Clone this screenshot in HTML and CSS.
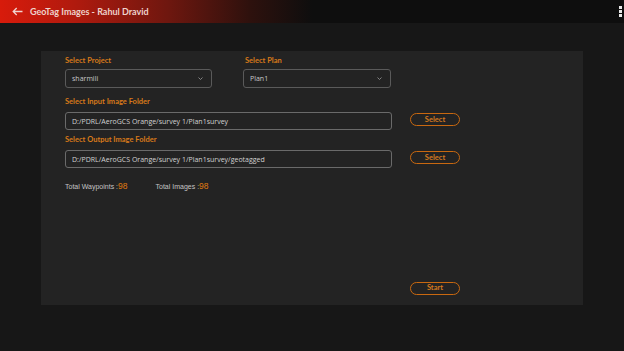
FILE: index.html
```html
<!DOCTYPE html>
<html lang="en">
<head>
  <meta charset="UTF-8" />
  <title>GeoTag Images</title>
  <link rel="stylesheet" href="styles.css">
</head>
<body>
  <header class="topbar">
    <svg class="back" width="11" height="9" viewBox="0 0 11 9">
      <path d="M10.5 4.5H1.2M4.7 1L1.2 4.5L4.7 8" fill="none" stroke="#f1d4d0" stroke-width="1.3"/>
    </svg>
    <span class="title">GeoTag Images - Rahul Dravid</span>
    <div class="menu"><i></i><i></i><i></i></div>
  </header>

  <main class="panel">
    <div class="row-selects">
      <div class="field">
        <label class="label">Select Project</label>
        <div class="dropdown wide1"><span>sharmili</span><svg width="5" height="3" viewBox="0 0 5 3"><path d="M0.5 0.5L2.5 2.5L4.5 0.5" fill="none" stroke="#9a9a9a" stroke-width="0.8"/></svg></div>
      </div>
      <div class="field">
        <label class="label">Select Plan</label>
        <div class="dropdown wide2"><span>Plan1</span><svg width="5" height="3" viewBox="0 0 5 3"><path d="M0.5 0.5L2.5 2.5L4.5 0.5" fill="none" stroke="#9a9a9a" stroke-width="0.8"/></svg></div>
      </div>
    </div>

    <label class="label folder-label first">Select Input Image Folder</label>
    <div class="folder-row">
      <div class="path-box">D:/PDRL/AeroGCS Orange/survey 1/Plan1survey</div>
      <button class="pill">Select</button>
    </div>

    <label class="label folder-label">Select Output Image Folder</label>
    <div class="folder-row">
      <div class="path-box">D:/PDRL/AeroGCS Orange/survey 1/Plan1survey/geotagged</div>
      <button class="pill">Select</button>
    </div>

    <div class="totals">
      <span>Total Waypoints :<b>98</b></span>
      <span>Total Images :<b>98</b></span>
    </div>

    <div class="footer-row">
      <button class="pill">Start</button>
    </div>
  </main>
</body>
</html>
```

FILE: styles.css
```css
html {
  overflow: hidden;
}
body {
  margin: 0;
  background: #171717;
  font-family: "Open Sans", sans-serif;
  color: #cfcfcf;
  height: 351px;
  overflow: hidden;
}
.topbar {
  width: 624px;
  box-sizing: border-box;
  height: 23px;
  display: flex;
  align-items: center;
  background: linear-gradient(90deg, #d81b0b 0%, #b01a0e 12%, #6e170f 27%, #2e110d 40%, #0e0e0e 50%, #0e0e0e 100%);
  padding: 0 2px 0 12px;
}
.back {
  margin-right: 7px;
}
.title {
  font-family: "Lato", sans-serif;
  font-weight: 700;
  font-size: 9px;
  color: #eed2cc;
}
.menu {
  margin-left: auto;
  display: flex;
  flex-direction: column;
  gap: 1.5px;
}
.menu i {
  display: block;
  width: 3px;
  height: 2.5px;
  background: #e8e8e8;
}
.panel {
  margin: 28px 0 0 41px;
  width: 542px;
  height: 254px;
  background: #232323;
  box-sizing: border-box;
  padding: 5px 0 0 24px;
}
.label {
  display: block;
  font-family: "Lato", sans-serif;
  font-weight: 700;
  font-size: 7.5px;
  color: #d87a1a;
  line-height: 10px;
}
.row-selects {
  display: flex;
  gap: 31px;
}
.field .label {
  margin-bottom: 3px;
}
.field + .field .label {
  margin-left: 2px;
}
.dropdown {
  height: 19px;
  box-sizing: border-box;
  border: 1px solid #5a5a5a;
  border-radius: 3px;
  display: flex;
  align-items: center;
  justify-content: space-between;
  padding: 0 8px 0 6px;
  font-size: 7px;
  color: #c8c8c8;
}
.wide1 { width: 147px; }
.wide2 { width: 148px; }
.folder-label {
  margin-top: 5px;
  margin-bottom: 5px;
}
.folder-label.first {
  margin-top: 9px;
}
.folder-row {
  display: flex;
  align-items: center;
}
.path-box {
  width: 327px;
  height: 18px;
  box-sizing: border-box;
  border: 1px solid #6a6a6a;
  border-radius: 3px;
  display: flex;
  align-items: center;
  padding-left: 6px;
  font-size: 7px;
  color: #d2d2d2;
}
.pill {
  margin-left: 18px;
  width: 50px;
  height: 13px;
  box-sizing: border-box;
  border: 1.4px solid #c86810;
  border-radius: 7px;
  background: transparent;
  color: #d47a20;
  font-family: "Lato", sans-serif;
  font-weight: 700;
  font-size: 7.5px;
  padding: 0;
  line-height: 10px;
}
.folder-row .pill {
  margin-top: -3px;
}
.totals {
  margin-top: 13px;
  display: flex;
  gap: 28px;
  font-family: "Liberation Sans", sans-serif;
  font-size: 7px;
  color: #c4c4c4;
}
.totals b {
  font-weight: normal;
  color: #e07a10;
  font-size: 8.5px;
}
.footer-row {
  margin-top: 82px;
  padding-left: 345px;
}
.footer-row .pill {
  margin-left: 0;
}
```
